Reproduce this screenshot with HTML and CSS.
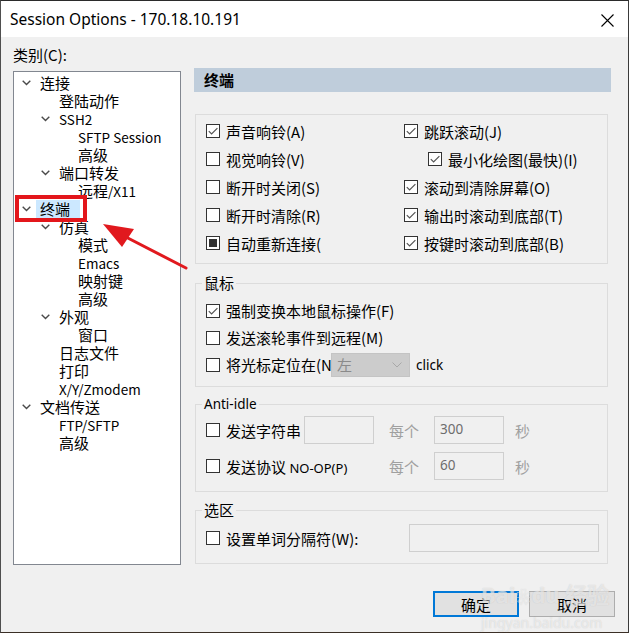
FILE: index.html
```html
<!DOCTYPE html>
<html lang="zh-CN">
<head>
<meta charset="utf-8">
<title>Session Options</title>
<link rel="stylesheet" href="styles.css">
</head>
<body>
<div class="window">
  <div class="titlebar">
    <span class="title">Session Options - 170.18.10.191</span>
    <svg class="close" width="13" height="13" viewBox="0 0 13 13"><path d="M0.5 0.5 L12.5 12.5 M12.5 0.5 L0.5 12.5" stroke="#000" stroke-width="1.1" fill="none"/></svg>
  </div>
  <div class="main">
    <div class="left">
      <div class="cat-label">类别(C):</div>
      <div class="tree">
        <div class="row"><span class="tog"><svg class="chev" viewBox="0 0 9 6"><path d="M0.7 0.8 L4.5 4.6 L8.3 0.8"/></svg></span><span>连接</span></div>
        <div class="row lv1"><span class="tog"></span><span>登陆动作</span></div>
        <div class="row lv1"><span class="tog"><svg class="chev" viewBox="0 0 9 6"><path d="M0.7 0.8 L4.5 4.6 L8.3 0.8"/></svg></span><span class="lt">SSH2</span></div>
        <div class="row lv2"><span class="tog"></span><span class="lt">SFTP Session</span></div>
        <div class="row lv2"><span class="tog"></span><span>高级</span></div>
        <div class="row lv1"><span class="tog"><svg class="chev" viewBox="0 0 9 6"><path d="M0.7 0.8 L4.5 4.6 L8.3 0.8"/></svg></span><span>端口转发</span></div>
        <div class="row lv2"><span class="tog"></span><span>远程<span class="lt">/X11</span></span></div>
        <div class="row"><span class="tog"><svg class="chev" viewBox="0 0 9 6"><path d="M0.7 0.8 L4.5 4.6 L8.3 0.8"/></svg></span><span class="sel">终端</span></div>
        <div class="row lv1"><span class="tog"><svg class="chev" viewBox="0 0 9 6"><path d="M0.7 0.8 L4.5 4.6 L8.3 0.8"/></svg></span><span>仿真</span></div>
        <div class="row lv2"><span class="tog"></span><span>模式</span></div>
        <div class="row lv2"><span class="tog"></span><span class="lt">Emacs</span></div>
        <div class="row lv2"><span class="tog"></span><span>映射键</span></div>
        <div class="row lv2"><span class="tog"></span><span>高级</span></div>
        <div class="row lv1"><span class="tog"><svg class="chev" viewBox="0 0 9 6"><path d="M0.7 0.8 L4.5 4.6 L8.3 0.8"/></svg></span><span>外观</span></div>
        <div class="row lv2"><span class="tog"></span><span>窗口</span></div>
        <div class="row lv1"><span class="tog"></span><span>日志文件</span></div>
        <div class="row lv1"><span class="tog"></span><span>打印</span></div>
        <div class="row lv1"><span class="tog"></span><span class="lt">X/Y/Zmodem</span></div>
        <div class="row"><span class="tog"><svg class="chev" viewBox="0 0 9 6"><path d="M0.7 0.8 L4.5 4.6 L8.3 0.8"/></svg></span><span>文档传送</span></div>
        <div class="row lv1"><span class="tog"></span><span class="lt">FTP/SFTP</span></div>
        <div class="row lv1"><span class="tog"></span><span>高级</span></div>
      </div>
    </div>

    <div class="right">
      <div class="hdr">终端</div>

      <div class="group g1">
        <div class="grid">
          <label class="cb"><span class="box on"><svg viewBox="0 0 12 12"><path d="M1.8 6.2 L4.6 9 L10.4 3.2"/></svg></span><span>声音响铃(A)</span></label>
          <label class="cb"><span class="box on"><svg viewBox="0 0 12 12"><path d="M1.8 6.2 L4.6 9 L10.4 3.2"/></svg></span><span>跳跃滚动(J)</span></label>
          <label class="cb"><span class="box"></span><span>视觉响铃(V)</span></label>
          <label class="cb indent"><span class="box on"><svg viewBox="0 0 12 12"><path d="M1.8 6.2 L4.6 9 L10.4 3.2"/></svg></span><span>最小化绘图(最快)(I)</span></label>
          <label class="cb"><span class="box"></span><span>断开时关闭(S)</span></label>
          <label class="cb"><span class="box on"><svg viewBox="0 0 12 12"><path d="M1.8 6.2 L4.6 9 L10.4 3.2"/></svg></span><span>滚动到清除屏幕(O)</span></label>
          <label class="cb"><span class="box"></span><span>断开时清除(R)</span></label>
          <label class="cb"><span class="box on"><svg viewBox="0 0 12 12"><path d="M1.8 6.2 L4.6 9 L10.4 3.2"/></svg></span><span>输出时滚动到底部(T)</span></label>
          <label class="cb"><span class="box mixed"><span class="fill"></span></span><span>自动重新连接(</span></label>
          <label class="cb"><span class="box on"><svg viewBox="0 0 12 12"><path d="M1.8 6.2 L4.6 9 L10.4 3.2"/></svg></span><span>按键时滚动到底部(B)</span></label>
        </div>
      </div>

      <div class="group g-mouse">
        <div class="legend">鼠标</div>
        <div class="mrows">
          <label class="cb mrow"><span class="box on"><svg viewBox="0 0 12 12"><path d="M1.8 6.2 L4.6 9 L10.4 3.2"/></svg></span><span>强制变换本地鼠标操作(F)</span></label>
          <label class="cb mrow"><span class="box"></span><span>发送滚轮事件到远程(M)</span></label>
          <div class="cb mrow"><span class="box"></span><span class="lbl-n">将光标定位在(N</span>
            <span class="select"><span>左</span><svg class="schev" viewBox="0 0 10 6"><path d="M0.5 0.5 L5 5 L9.5 0.5"/></svg></span>
            <span class="click">click</span>
          </div>
        </div>
      </div>

      <div class="group g-idle">
        <div class="legend latin">Anti-idle</div>
        <div class="irows">
          <div class="cb irow"><span class="box"></span><span class="lbl-s">发送字符串</span><span class="field w70"></span><span class="muted each">每个</span><span class="field w70 val">300</span><span class="muted sec">秒</span></div>
          <div class="cb irow"><span class="box"></span><span class="lbl-p">发送协议 <span class="latin small">NO-OP(P)</span></span><span class="muted each">每个</span><span class="field w70 val">60</span><span class="muted sec">秒</span></div>
        </div>
      </div>

      <div class="group g-sel">
        <div class="legend">选区</div>
        <div class="cb srow"><span class="box"></span><span class="lbl-w">设置单词分隔符(W):</span><span class="field w190"></span></div>
      </div>

      <div class="buttons">
        <span class="btn primary">确定</span>
        <span class="btn">取消</span>
      </div>
    </div>
  </div>

  <div class="mark"></div>
  <svg class="arrow" width="629" height="633" viewBox="0 0 629 633">
    <line x1="186" y1="268" x2="122" y2="235" stroke="#e1191e" stroke-width="3" stroke-linecap="round"/>
    <polygon points="103,224 134,229 122,247" fill="#e1191e"/>
  </svg>
  <div class="wm"><span class="wm1">Bai<span class="paw">❀</span>du 经验</span><span class="wm2">jingyan.baidu.com</span></div>
</div>
</body>
</html>
```
FILE: styles.css
```css
* { box-sizing: border-box; }
html, body { margin: 0; padding: 0; }
body {
  width: 629px;
  height: 633px;
  overflow: hidden;
  font-family: "Noto Sans CJK SC", "Noto Sans", sans-serif;
  font-size: 15px;
  color: #000;
  background: #3b2f26;
}
.window {
  position: relative;
  width: 629px;
  height: 633px;
  background: #f0f0f0;
  border-top: 1px solid #2b2b2b;
  border-left: 1px solid #4f4f4f;
  border-right: 1px solid #3a3a3a;
  border-bottom: 1px solid #3b2f26;
  display: flex;
  flex-direction: column;
}
.titlebar {
  height: 36px;
  flex: none;
  background: #fff;
  display: flex;
  align-items: center;
  justify-content: space-between;
  padding: 0 14px 0 9px;
}
.title {
  font-family: "Noto Sans", sans-serif;
  font-size: 15.5px;
}
.close { width: 13px; height: 13px; display: block; margin-top: 2px; }

.main {
  display: flex;
  gap: 13px;
  padding: 9px 0 0 12px;
  flex: 1;
}
.left { width: 168px; flex: none; display: flex; flex-direction: column; }
.cat-label { height: 18px; line-height: 18px; margin-bottom: 7px; }
.tree {
  height: 494px;
  background: #fff;
  border: 1px solid #828790;
  padding-top: 2px;
}
.row {
  height: 18px;
  line-height: 18px;
  display: flex;
  align-items: center;
  white-space: nowrap;
}
.row.lv1 { padding-left: 19px; }
.row.lv2 { padding-left: 38px; }
.lt { font-size: 13.5px; }
.tog {
  width: 26px;
  height: 18px;
  flex: none;
  display: flex;
  align-items: center;
  justify-content: center;
  padding-right: 1px;
}
.chev { width: 9px; height: 6px; display: block; }
.chev path { fill: none; stroke: #4a4a4a; stroke-width: 1.4; }
.sel {
  background: #cce8ff;
  margin-left: -4px;
  padding: 0 10px 0 4px;
}

.right { width: 417px; flex: none; padding-top: 22px; display: flex; flex-direction: column; }
.hdr {
  height: 24px;
  line-height: 24px;
  background: #bfcddb;
  padding-left: 10px;
  font-weight: bold;
}
.group {
  margin: 0 3px 0 1px;
  border: 1px solid #dcdcdc;
}
.g1 { margin-top: 22px; }
.grid {
  display: grid;
  grid-template-columns: 198px 1fr;
  grid-auto-rows: 28px;
  padding: 2px 0 6px 10px;
}
.cb {
  display: flex;
  align-items: center;
  gap: 6px;
  white-space: nowrap;
}
.cb.indent { margin-left: 24px; }
.box {
  width: 14px;
  height: 14px;
  flex: none;
  border: 1px solid #333;
  background: #fff;
  display: flex;
  align-items: center;
  justify-content: center;
}
.box svg { width: 12px; height: 12px; display: block; }
.box svg path { fill: none; stroke: #555; stroke-width: 1.2; }
.box .fill { width: 8px; height: 8px; background: #333; }

.legend {
  display: block;
  width: fit-content;
  margin: -10px 0 0 6px;
  padding: 0 2px;
  height: 18px;
  line-height: 18px;
  background: #f0f0f0;
}
.latin { font-family: "Noto Sans", sans-serif; font-size: 13.5px; }
.small { font-size: 13px; }

.g-mouse { margin-top: 19px; }
.mrows { padding: 5px 0 8px 10px; }
.mrow { height: 27px; }
.lbl-n { width: 105px; overflow: hidden; margin-right: -6px; }
.select {
  width: 79px;
  height: 24px;
  background: #cccccc;
  border: 1px solid #c4c4c4;
  display: flex;
  align-items: center;
  justify-content: space-between;
  padding: 0 7px 0 5px;
  color: #8a8a8a;
}
.schev { width: 10px; height: 6px; display: block; }
.schev path { fill: none; stroke: #a8a8a8; stroke-width: 1; }
.click { font-family: "Noto Sans", sans-serif; font-size: 13.5px; }

.g-idle { margin-top: 17px; }
.irows { padding: 3px 0 11px 10px; display: flex; flex-direction: column; gap: 8px; }
.irow { height: 28px; gap: 0; }
.irow .box { margin-right: 6px; }
.lbl-s { width: 78px; overflow: hidden; }
.lbl-p { width: 163px; }
.field {
  height: 28px;
  background: #f0f0f0;
  border: 1px solid #cfcfcf;
  flex: none;
}
.w70 { width: 70px; }
.w190 { width: 190px; }
.val {
  font-family: "Noto Sans", sans-serif;
  font-size: 13.5px;
  color: #6d6d6d;
  padding: 2px 0 0 5px;
  line-height: 20px;
}
.muted { color: #a0a0a0; }
.each { width: 45px; margin-left: 15px; }
.irow .lbl-p + .each { margin-left: 0; }
.sec { margin-left: 11px; }

.g-sel { margin-top: 18px; }
.srow { height: 28px; padding-left: 10px; margin: 5px 0 11px; gap: 0; }
.srow .box { margin-right: 6px; }
.lbl-w { width: 183px; }

.buttons {
  display: flex;
  justify-content: flex-end;
  gap: 10px;
  margin: 27px -4px 0 0;
}
.btn {
  width: 86px;
  height: 26px;
  background: #e1e1e1;
  border: 1px solid #adadad;
  display: flex;
  align-items: center;
  justify-content: center;
}
.btn.primary { border: 2px solid #0078d7; }

.mark {
  position: absolute;
  left: 14px;
  top: 194px;
  width: 72px;
  height: 27px;
  border: 4px solid #e3161b;
}
.arrow { position: absolute; left: -1px; top: -1px; pointer-events: none; }
.wm {
  position: absolute;
  left: 480px;
  top: 580px;
  display: flex;
  flex-direction: column;
  color: rgba(255, 255, 255, 0.55);
  text-shadow: 0 0 1px rgba(150, 150, 150, 0.45);
  pointer-events: none;
  font-family: "Noto Sans", "Noto Sans CJK SC", sans-serif;
}
.wm1 { font-size: 22px; font-weight: bold; line-height: 26px; }
.paw { font-size: 16px; }
.wm2 { font-size: 14px; line-height: 18px; margin-top: 4px; }
```
